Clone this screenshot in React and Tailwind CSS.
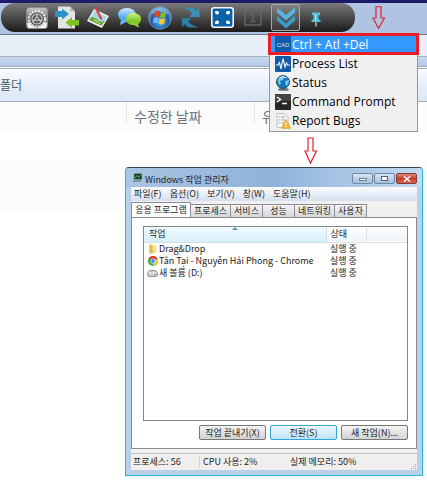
import React from "react";

function GearIcon() {
  return (
    <svg viewBox="0 0 22 22" className="size-[22px]" aria-hidden="true">
      <defs>
        <linearGradient id="gearBg" x1="0" y1="0" x2="0" y2="1">
          <stop offset="0" stopColor="#c9c9c9" />
          <stop offset="0.5" stopColor="#777" />
          <stop offset="1" stopColor="#a5a5a5" />
        </linearGradient>
      </defs>
      <rect x="0.5" y="0.5" width="21" height="21" rx="3" fill="url(#gearBg)" stroke="#8b8b8b" />
      <circle cx="11" cy="12" r="8" fill="none" stroke="#e4e4e4" strokeWidth="2.4" strokeDasharray="2 1.2" />
      <circle cx="11" cy="12" r="6.6" fill="#555" />
      <circle cx="11" cy="12" r="5" fill="none" stroke="#c4c4c4" strokeWidth="1.2" />
      <path d="M11 12 L11 7 M11 12 L6.5 14 M11 12 L15.5 14" stroke="#c8c8c8" strokeWidth="1.5" />
      <circle cx="11" cy="12" r="2" fill="#777" stroke="#ddd" strokeWidth="0.7" />
      <path d="M1 16 L4 15.500 Q5 19 9 20 L8 21 L2 21Z M21 16 L18 15.500 Q17 19 13 20 L14 21 L20 21Z" fill="#f2f2f2" />
    </svg>
  );
}

function TransferIcon() {
  return (
    <svg viewBox="0 0 24 23" className="h-[23px] w-6" aria-hidden="true">
      <path d="M3 0.5 H15 L20 5.5 V22.5 H3Z" fill="#e4e4e4" />
      <path d="M15 0.5 V5.5 H20Z" fill="#bdbdbd" />
      <path d="M0 5 H7 V2.5 L14 8 L7 13.5 V11 H0Z" fill="#2e93c4" />
      <path d="M24 14 H17 V11 L10.500 16.500 L17 22 V19.500 H24Z" fill="#7cc51e" />
    </svg>
  );
}

function PictureIcon() {
  return (
    <svg viewBox="0 0 24 22" className="h-[22px] w-6" aria-hidden="true">
      <path d="M8 2 L23 9 L16 21 L1 14Z" fill="#f1f1ee" />
      <path d="M8.500 4 L21 9.700 L15.500 18.700 L3 13Z" fill="#a9d7e8" />
      <path d="M5 10 Q9 10 12 13 T19 13.500 L15.500 18.700 L3 13Z" fill="#65a936" />
      <path d="M8 13 Q11 13 14 17" fill="none" stroke="#d5e889" />
      <path d="M9 0 L10.500 0 L15.500 10 L16 13.500 L13.500 11 L8.500 1Z" fill="#d12525" />
      <path d="M9.500 1 L14 10" stroke="#f38b83" strokeWidth="0.7" />
    </svg>
  );
}

function ChatIcon() {
  return (
    <svg viewBox="0 0 24 21" className="h-[21px] w-6" aria-hidden="true">
      <defs>
        <linearGradient id="chatBlue" x1="0" y1="0" x2="0" y2="1">
          <stop offset="0" stopColor="#d3edff" />
          <stop offset="0.6" stopColor="#4aa6ef" />
          <stop offset="1" stopColor="#81c6f8" />
        </linearGradient>
        <linearGradient id="chatGreen" x1="0" y1="0" x2="0" y2="1">
          <stop offset="0" stopColor="#cdf082" />
          <stop offset="0.6" stopColor="#78c321" />
          <stop offset="1" stopColor="#b0e34e" />
        </linearGradient>
      </defs>
      <path d="M10 1 C15 1 19 4 19 8 C19 12 15 15 9 15 L3 18 L4 13 C-2 8 2 1 10 1Z" fill="url(#chatBlue)" />
      <path d="M16 6 C21 6 24 8.500 24 12 C24 14 23 16 21 17 L22 20.500 L17 18 C12 18 9 15.500 9 12 C9 8.500 12 6 16 6Z" fill="url(#chatGreen)" />
    </svg>
  );
}

function StartIcon() {
  return (
    <svg viewBox="0 0 24 24" className="size-6" aria-hidden="true">
      <defs>
        <radialGradient id="orb" cx="0.5" cy="0.65" r="0.6">
          <stop offset="0" stopColor="#4cc0ef" />
          <stop offset="0.65" stopColor="#1f5ba7" />
          <stop offset="1" stopColor="#6fa8d8" />
        </radialGradient>
      </defs>
      <circle cx="12" cy="12" r="11.300" fill="url(#orb)" stroke="#87a8c9" strokeWidth="0.7" />
      <path d="M3 8 Q12 -4 21 8 Q12 4 3 8Z" fill="#a7cbe9" opacity="0.6" />
      <path d="M7 5.500 Q9.500 3.800 12 5.500 L11 11 Q8.500 9.600 6 11Z" fill="#e4481e" />
      <path d="M13 5.900 Q16 7.400 18.500 5.700 L17.400 11.200 Q14.500 12.600 12 11.300Z" fill="#82bd28" />
      <path d="M5.800 12 Q8.500 10.700 10.800 12 L9.800 17.300 Q7.300 16 4.900 17.300Z" fill="#79b5f2" />
      <path d="M11.800 12.400 Q14.500 13.700 17.200 12.300 L16.200 17.600 Q13.500 19.200 10.800 17.800Z" fill="#fbc72b" />
    </svg>
  );
}

function RefreshIcon() {
  return (
    <svg viewBox="0 0 20 23" className="h-[23px] w-5" aria-hidden="true">
      <path d="M1 1.500 H11 Q14 2 14.500 5 L18.500 2 V11 H8 L11 8 Q10 4 1 1.500Z" fill="#3a8fb4" />
      <path d="M18 21.500 H8 Q5 21 4.500 18 L1 21 V12 H10 L7.500 15 Q9 19 18 21.500Z" fill="#2e7fa5" />
    </svg>
  );
}

function FullscreenIcon() {
  return (
    <svg viewBox="0 0 23 21" className="h-[21px] w-[23px]" aria-hidden="true">
      <rect x="0.800" y="0.800" width="21.400" height="19.400" rx="2.500" fill="#0a62a8" stroke="#f3f7fa" strokeWidth="1.600" />
      <g fill="#fff">
        <path d="M4 4 H7 L8 7 L5 7Z M19 4 H16 L15 7 L18 7Z M4 17 H7 L8 14 L5 14Z M19 17 H16 L15 14 L18 14Z" />
        <circle cx="6" cy="5.800" r="1.800" />
        <circle cx="17" cy="5.800" r="1.800" />
        <circle cx="6" cy="15.200" r="1.800" />
        <circle cx="17" cy="15.200" r="1.800" />
      </g>
    </svg>
  );
}

function MonitorOneIcon() {
  return (
    <svg viewBox="0 0 18 17" className="h-[17px] w-[18px]" aria-hidden="true">
      <rect x="1" y="1" width="16" height="15" fill="none" stroke="#666" strokeWidth="1.500" />
      <path d="M7 5.500 L9 4 V12 M6.500 12.500 H11.500" fill="none" stroke="#666" strokeWidth="1.500" />
    </svg>
  );
}

function ChevronsIcon() {
  return (
    <svg viewBox="0 0 20 22" className="h-[22px] w-5" aria-hidden="true">
      <path d="M1 0.500 L10 8 L19 0.500 V5.500 L10 13.500 L1 5.500Z" fill="#56b6dc" />
      <path d="M1 8.500 L10 16.500 L19 8.500 V13.500 L10 21.500 L1 13.500Z" fill="#399fc9" />
    </svg>
  );
}

function PinIcon() {
  return (
    <svg viewBox="0 0 10 15" className="h-[15px] w-2.5" aria-hidden="true">
      <path d="M1 0.500 H9 V3 L7.500 3.500 V7 L9.500 8 V10 H0.500 V8 L2.500 7 V3.500 L1 3Z" fill="#5bbbd8" />
      <path d="M4.500 2 V9" stroke="#b8edf7" />
      <path d="M5 10 V14.500" stroke="#c9dce2" strokeWidth="1.200" />
    </svg>
  );
}

function CadIcon() {
  return (
    <svg viewBox="0 0 16 16" className="size-4 shrink-0" aria-hidden="true">
      <rect width="16" height="16" rx="1" fill="#0f5ba5" />
      <text x="8" y="10.500" textAnchor="middle" fontSize="6" fill="#cfe2f3" fontFamily="Liberation Sans, sans-serif">CAD</text>
    </svg>
  );
}

function PulseIcon() {
  return (
    <svg viewBox="0 0 16 16" className="size-4 shrink-0" aria-hidden="true">
      <rect width="16" height="16" rx="1" fill="#0f5ba5" />
      <path d="M1 9 H3 L4.500 6.500 L6 13 L8 2.500 L10 11 L11.500 7 L12.500 9 H15" fill="none" stroke="#e4f0fa" strokeWidth="1.200" />
    </svg>
  );
}

function GlobeIcon() {
  return (
    <svg viewBox="0 0 16 16" className="size-4 shrink-0" aria-hidden="true">
      <path d="M3 14 Q8 11 14 14 L13 15.700 H4Z" fill="#68757e" />
      <circle cx="8" cy="7" r="6.500" fill="#1473b8" stroke="#31516b" />
      <path d="M2.500 5 Q6 0 10 2 L8 5 L5 6 L6 9 L4 10Z M10 6 L14 5 Q14 9 11 11Z" fill="#74cbed" />
      <path d="M4 3 Q8 0 12 3" fill="none" stroke="#d7f2ff" />
    </svg>
  );
}

function TerminalIcon() {
  return (
    <svg viewBox="0 0 16 16" className="size-4 shrink-0" aria-hidden="true">
      <rect width="16" height="16" rx="1" fill="#262626" />
      <path d="M0 0 H16 V7 Q8 6 0 9Z" fill="#454545" />
      <path d="M2 3 L5.500 5.500 L2 8 M7 9.500 H12" fill="none" stroke="#fff" strokeWidth="1.400" />
    </svg>
  );
}

function BugReportIcon() {
  return (
    <svg viewBox="0 0 16 16" className="size-4 shrink-0" aria-hidden="true">
      <path d="M2 0.500 H9.500 L13 4 V14.500 H2Z" fill="#f7f9fb" stroke="#aeb8c2" strokeWidth="0.800" />
      <path d="M6 4 H10 M6 7 H10 M6 10 H9" stroke="#8ba4c0" />
      <path d="M3.500 4 H5 M3.500 7 H5 M3.500 10 H5" stroke="#d7a336" />
      <path d="M11 6.500 L15.700 15.300 H6.500Z" fill="#f8b62d" stroke="#d58b16" strokeWidth="0.600" />
      <path d="M11 9.300 V12.300 M11 13.200 V14.300" stroke="#fff" strokeWidth="1.100" />
    </svg>
  );
}

function DownArrow({ className }) {
  return (
    <svg viewBox="0 0 14 28" className={className} preserveAspectRatio="none" aria-hidden="true">
      <path d="M4 1 H9 V14 H12.500 L6.500 26 L1 14 H4Z" fill="none" stroke="#e5202c" strokeWidth="1.200" />
    </svg>
  );
}

function TaskManagerIcon() {
  return (
    <svg viewBox="0 0 10 9" className="h-[9px] w-2.5" aria-hidden="true">
      <rect x="1" y="0.500" width="8" height="6" fill="#163d25" stroke="#8fa0a0" strokeWidth="0.600" />
      <path d="M2 5 L4 2.500 L5.500 4.500 L8 2" stroke="#3fc252" fill="none" />
      <path d="M0 8 H8" stroke="#59666e" />
    </svg>
  );
}

function FolderIcon() {
  return (
    <svg viewBox="0 0 10 10" className="size-2.5" aria-hidden="true">
      <path d="M1 0.500 H5 V9.500 H1Z" fill="#e9c65a" />
      <path d="M4 1.500 H8.500 V9 H4Z" fill="#f6df91" />
      <path d="M4 2 V9.500" stroke="#c79f34" strokeWidth="0.700" />
    </svg>
  );
}

function ChromeIcon() {
  return (
    <svg viewBox="0 0 10 10" className="size-2.5" aria-hidden="true">
      <circle cx="5" cy="5" r="5" fill="#35a852" />
      <path d="M5 5 L0.700 2.500 A5 5 0 0 1 9.300 2.500Z" fill="#e33b2e" />
      <path d="M5 5 L9.300 2.500 A5 5 0 0 1 5 10Z" fill="#fbc116" />
      <circle cx="5" cy="5" r="2.500" fill="#fff" />
      <circle cx="5" cy="5" r="1.900" fill="#4285f4" />
    </svg>
  );
}

function DriveIcon() {
  return (
    <svg viewBox="0 0 11 8" className="h-2 w-[11px]" aria-hidden="true">
      <path d="M2.500 1.500 H8.500 L10.500 4 V6.500 L9.500 7.500 H1.500 L0.500 6.500 V4Z" fill="#c9cdd0" stroke="#7f868b" strokeWidth="0.800" />
      <path d="M1.500 4 H9.500" stroke="#f3f4f5" />
      <path d="M7.500 5.800 H9" stroke="#52a64c" />
    </svg>
  );
}

const tools = [
  { label: "Settings", icon: GearIcon, width: "w-[22px]" },
  { label: "File transfer", icon: TransferIcon, width: "w-6" },
  { label: "Screenshot", icon: PictureIcon, width: "w-6" },
  { label: "Chat", icon: ChatIcon, width: "w-6" },
  { label: "Start", icon: StartIcon, width: "w-6" },
  { label: "Refresh", icon: RefreshIcon, width: "w-6" },
  { label: "Full screen", icon: FullscreenIcon, width: "w-6" },
  { label: "Monitor 1", icon: MonitorOneIcon, width: "w-6" },
];

const actions = [
  { label: "Process List", icon: PulseIcon },
  { label: "Status", icon: GlobeIcon },
  { label: "Command Prompt", icon: TerminalIcon },
  { label: "Report Bugs", icon: BugReportIcon },
];

const menus = ["파일(F)", "옵션(O)", "보기(V)", "창(W)", "도움말(H)"];

const tabs = [
  { label: "프로세스", width: "w-10" },
  { label: "서비스", width: "w-8" },
  { label: "성능", width: "w-8" },
  { label: "네트워킹", width: "w-10" },
  { label: "사용자", width: "w-8" },
];

const tasks = [
  { name: "Drag&Drop", icon: FolderIcon },
  { name: "Tân Tại - Nguyễn Hải Phong - Chrome", icon: ChromeIcon },
  { name: "새 볼륨 (D:)", icon: DriveIcon },
];

function Toolbar() {
  return (
    <div className="relative mr-[72px] ml-px flex h-[29px] items-center rounded-l-[14px] rounded-r-[14px] bg-linear-to-b from-[#7b7b7b] via-[#4a4a4a] to-[#1b1b1b] pl-[25px]">
      <div className="flex items-center gap-[7px]">
        {tools.map(({ label, icon: Icon, width }) => (
          <button key={label} type="button" aria-label={label} className={"flex h-6 items-center justify-center " + width}>
            <Icon />
          </button>
        ))}
      </div>
      <button type="button" aria-label="More actions" className="ml-1.5 flex h-[27px] w-[29px] items-center justify-center rounded-xs border border-[#a9a9a9] bg-white/10">
        <ChevronsIcon />
      </button>
      <button type="button" aria-label="Pin" className="ml-[11px] flex items-center pt-1">
        <PinIcon />
      </button>
    </div>
  );
}

function ActionMenu() {
  return (
    <div className="absolute top-[33px] left-[268px] w-[151px] font-['Open_Sans','Noto_Sans',sans-serif] text-[12px] leading-[19px] text-black">
      <button type="button" className="relative flex h-[22px] w-full items-center gap-px border-[3px] border-[#ed1c24] bg-[#3399ff] pl-1 whitespace-pre text-white">
        <CadIcon />
        Ctrl + Atl +Del
      </button>
      <div className="mx-px -mt-px border border-t-0 border-[#979797] bg-[#f0f0f0] pb-px">
        {actions.map(({ label, icon: Icon }) => (
          <button key={label} type="button" className="flex h-[19px] w-full items-center gap-px pl-[5px]">
            <Icon />
            {label}
          </button>
        ))}
      </div>
    </div>
  );
}

function TaskManager() {
  return (
    <section aria-label="Windows 작업 관리자" className="absolute top-[167px] left-[125px] flex h-[309px] w-[298px] flex-col rounded-t-[4px] border border-t-[#344454] border-r-[#23b9d2] border-b-[#23b9d2] border-l-[#8493a5] bg-[#b9d0ea] px-[5px] pb-[5px] text-[9px] leading-3 text-[#222]">
      <header className="-mx-[5px] flex h-[19px] shrink-0 items-center rounded-t-[3px] bg-linear-to-r from-[#a9c5e3] via-[#8fb2da] to-[#c5daf0] pr-[5px] pl-[7px]">
        <TaskManagerIcon />
        <h1 className="ml-0.5 grow pt-1">Windows 작업 관리자</h1>
        <div className="flex gap-px pt-0.5">
          <button type="button" aria-label="Minimize" className="flex h-[11px] w-[21px] items-end justify-center rounded-xs border border-[#6f87a3] bg-linear-to-b from-[#d7e5f4] to-[#a5c0dd] pb-0.5">
            <span className="h-[3px] w-2 border border-[#6b7c90] bg-white" />
          </button>
          <button type="button" aria-label="Maximize" className="flex h-[11px] w-[21px] items-center justify-center rounded-xs border border-[#6f87a3] bg-linear-to-b from-[#d7e5f4] to-[#a5c0dd]">
            <span className="h-[5px] w-[7px] border border-[#4f6075] bg-white" />
          </button>
          <button type="button" aria-label="Close" className="flex h-[11px] w-[21px] items-center justify-center rounded-xs border border-[#7b3d3d] bg-linear-to-b from-[#e0887a] via-[#c93c29] to-[#d6634d]">
            <svg viewBox="0 0 8 6" className="h-1.5 w-2" aria-hidden="true">
              <path d="M1 0.500 L7 5.500 M7 0.500 L1 5.500" stroke="#fff" strokeWidth="1.500" />
            </svg>
          </button>
        </div>
      </header>

      <div className="flex min-h-0 grow flex-col bg-[#f0f0f0]">
        <nav className="flex h-[14px] shrink-0 items-center gap-2 bg-linear-to-b from-[#fbfcfe] to-[#d6dff0] pl-[3px]">
          {menus.map((m) => (
            <button key={m} type="button">{m}</button>
          ))}
        </nav>

        <div role="tablist" className="flex h-4 shrink-0 items-end">
          <button type="button" role="tab" aria-selected="true" className="h-[15px] w-[60px] border border-b-0 border-[#898c95] bg-white whitespace-nowrap">
            응용 프로그램
          </button>
          {tabs.map(({ label, width }) => (
            <button key={label} type="button" role="tab" aria-selected="false" className={"h-[13px] border border-b-0 border-l-0 border-[#898c95] bg-linear-to-b from-[#f5f5f5] to-[#d6d6d6] whitespace-nowrap " + width}>
              {label}
            </button>
          ))}
        </div>

        <div className="flex min-h-0 grow flex-col border border-[#898c95] bg-white pt-2 pr-2 pb-2 pl-[11px]">
          <div className="grow border border-[#828790]">
            <table className="w-full table-fixed border-collapse text-left">
              <colgroup>
                <col />
                <col className="w-10" />
                <col className="w-[41px]" />
              </colgroup>
              <thead>
                <tr className="h-[15px] border-b border-[#d5dfe8] bg-linear-to-b from-white to-[#edf3f8]">
                  <th className="relative border-r border-[#cfdde8] bg-linear-to-b from-[#f3fbfe] to-[#d5effa] p-0 pl-[5px] font-normal">
                    작업
                    <svg viewBox="0 0 6 3" className="absolute top-0 left-[88px] h-[3px] w-1.5" aria-hidden="true">
                      <path d="M0 3 L3 0 L6 3Z" fill="#5995b8" />
                    </svg>
                  </th>
                  <th className="border-r border-[#dce3e9] p-0 pl-1 font-normal">상태</th>
                  <th className="p-0" aria-label="여백" />
                </tr>
              </thead>
              <tbody>
                {tasks.map(({ name, icon: Icon }) => (
                  <tr key={name} className="h-3">
                    <td className="p-0 pl-[3px]">
                      <span className="flex h-3 items-center gap-px whitespace-nowrap">
                        <span className="flex w-[11px] justify-center">
                          <Icon />
                        </span>
                        {name}
                      </span>
                    </td>
                    <td className="p-0 pl-1 whitespace-nowrap">실행 중</td>
                    <td className="p-0" />
                  </tr>
                ))}
              </tbody>
            </table>
          </div>
          <div className="mt-1 flex justify-end gap-1">
            <button type="button" className="h-[15px] w-[67px] rounded-xs border border-[#777] bg-linear-to-b from-[#f4f4f4] to-[#d2d2d2] leading-[13px]">작업 끝내기(X)</button>
            <button type="button" className="h-[15px] w-[67px] rounded-xs border border-[#32a9d8] bg-linear-to-b from-[#eff8fc] to-[#bde3f5] leading-[13px]">전환(S)</button>
            <button type="button" className="h-[15px] w-[67px] rounded-xs border border-[#777] bg-linear-to-b from-[#f4f4f4] to-[#d2d2d2] leading-[13px]">새 작업(N)...</button>
          </div>
        </div>

        <footer className="mt-1 flex h-[17px] shrink-0 items-center border-t border-[#c0c0c0] bg-[#f1eeee] pl-0.5">
          <span className="w-[67px] border-r border-[#d5d5d5]">프로세스: 56</span>
          <span className="w-[90px] pl-[3px]">CPU 사용: 2%</span>
          <span className="grow">실제 메모리: 50%</span>
          <svg viewBox="0 0 6 6" className="size-1.5 self-end" aria-hidden="true">
            <path d="M4 0 H5 V1 H4Z M2 2 H3 V3 H2Z M4 2 H5 V3 H4Z M0 4 H1 V5 H0Z M2 4 H3 V5 H2Z M4 4 H5 V5 H4Z" fill="#a5a5a5" />
          </svg>
        </footer>
      </div>
    </section>
  );
}

export default function App() {
  return (
    <main className="relative min-h-screen overflow-hidden bg-white font-['Noto_Sans_CJK_KR',sans-serif]">
      <div className="h-[35px] border-b border-[#68798f] bg-linear-to-b from-[#1d1a69] from-9% to-[#aec4e2] to-10%">
        <div className="pt-[3px]">
          <Toolbar />
        </div>
      </div>
      <div className="h-[22px] border-b border-[#a4b1c3] bg-[#e9eff8]" />
      <div className="h-[9px] bg-linear-to-b from-[#c9d8eb] to-[#b3cbe8]" />
      <div className="h-[3px] border-y border-[#9caabd] bg-white" />
      <div className="flex h-[33px] items-center border-b border-[#a3b0c0] bg-linear-to-b from-[#fafcff] via-[#e6effa] to-[#dce7f5] text-[12px] text-[#4d5666]">
        <span>폴더</span>
      </div>
      <div className="flex h-[30px] bg-[#fcfcfc] text-[14px] leading-[29px] text-[#67727f]">
        <div className="h-[22px] w-[127px] shrink-0 border-r border-[#dce6f0]" />
        <div className="h-[22px] w-32 shrink-0 border-r border-[#dce6f0] pl-[7px]">수정한 날짜</div>
        <div className="pl-[7px]">유형</div>
      </div>
      <div className="mt-[29px] h-[50px] bg-[#fcfcfc]" />

      <ActionMenu />
      <DownArrow className="absolute top-[6px] left-[372px] h-6 w-[14px]" />
      <DownArrow className="absolute top-[137px] left-[304px] h-7 w-[14px]" />
      <TaskManager />
    </main>
  );
}
